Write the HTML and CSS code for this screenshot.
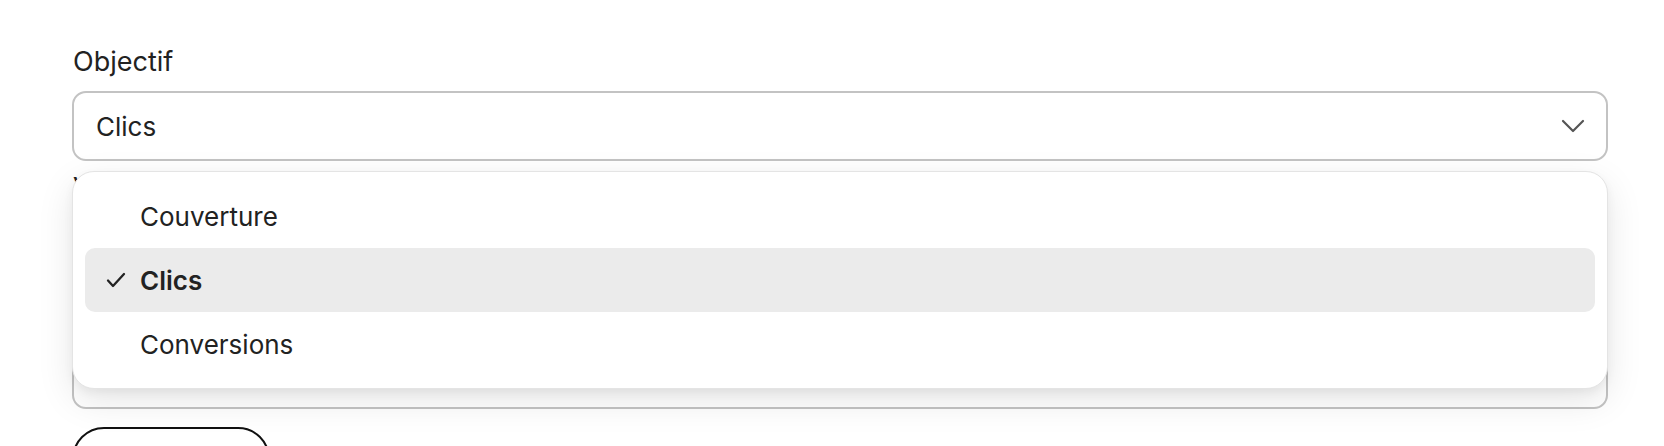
FILE: index.html
```html
<!DOCTYPE html>
<html lang="fr">
<head>
<meta charset="utf-8">
<title>Objectif</title>
<link rel="stylesheet" href="styles.css">
</head>
<body>
<form class="form">
  <div class="field">
    <label class="label">Objectif</label>
    <div class="select-wrap">
      <div class="select">
        <span class="select-value">Clics</span>
        <svg class="chevron" width="24" height="14" viewBox="0 0 24 14"><path d="M2 2 L12 12 L22 2" fill="none" stroke="#555" stroke-width="2.2" stroke-linecap="round" stroke-linejoin="round"/></svg>
      </div>
      <ul class="menu">
        <li class="option"><span class="check"></span><span class="opt-text">Couverture</span></li>
        <li class="option selected"><span class="check"><svg width="20" height="16" viewBox="0 0 20 16"><path d="M2 8.5 L7 14 L18 2" fill="none" stroke="#222" stroke-width="2.3" stroke-linecap="round" stroke-linejoin="round"/></svg></span><span class="opt-text">Clics</span></li>
        <li class="option"><span class="check"></span><span class="opt-text">Conversions</span></li>
      </ul>
    </div>
  </div>
  <div class="field field-second">
    <label class="label">Valeur cible</label>
    <div class="textarea"></div>
  </div>
  <div class="actions">
    <button type="button" class="btn">Enregistrer</button>
  </div>
</form>
</body>
</html>
```
FILE: styles.css
```css
html, body {
  margin: 0;
  padding: 0;
  background: #ffffff;
}
body {
  font-family: Inter, "Noto Sans", "Liberation Sans", sans-serif;
  color: #222222;
}
.form {
  padding: 44px 56px 0 72px;
  display: flex;
  flex-direction: column;
}
.field {
  display: flex;
  flex-direction: column;
}
.label {
  font-size: 27px;
  line-height: 36px;
  color: #222;
  margin-bottom: 11px;
  padding-left: 1px;
}
.select-wrap {
  position: relative;
}
.select {
  box-sizing: border-box;
  height: 70px;
  border: 2px solid #c3c3c3;
  border-radius: 14px;
  display: flex;
  align-items: center;
  justify-content: space-between;
  padding: 0 21px 0 22px;
  background: #fff;
}
.select-value {
  font-size: 26px;
  color: #222;
}
.chevron {
  display: block;
}
.menu {
  position: absolute;
  left: 0;
  right: 0;
  top: 80px;
  margin: 0;
  list-style: none;
  box-sizing: border-box;
  padding: 12px;
  background: #fff;
  border: 1px solid #e4e4e4;
  border-radius: 22px;
  box-shadow: 0 12px 36px rgba(0, 0, 0, 0.10), 0 4px 10px rgba(0, 0, 0, 0.05);
  z-index: 2;
}
.option {
  height: 64px;
  display: flex;
  align-items: center;
  border-radius: 10px;
  font-size: 26px;
  color: #222;
}
.option.selected {
  background: #ebebeb;
  font-weight: 600;
}
.check {
  width: 55px;
  padding-left: 21px;
  box-sizing: border-box;
  display: flex;
  align-items: center;
}
.check svg {
  display: block;
}
.field-second {
  margin-top: 9px;
}
.textarea {
  box-sizing: border-box;
  height: 192px;
  border: 2px solid #c3c3c3;
  border-radius: 14px;
  background: #fff;
}
.actions {
  margin-top: 18px;
}
.btn {
  box-sizing: border-box;
  width: 198px;
  height: 64px;
  border: 2px solid #111;
  border-radius: 32px;
  background: #fff;
  font-family: inherit;
  font-size: 24px;
  color: #111;
}
```
